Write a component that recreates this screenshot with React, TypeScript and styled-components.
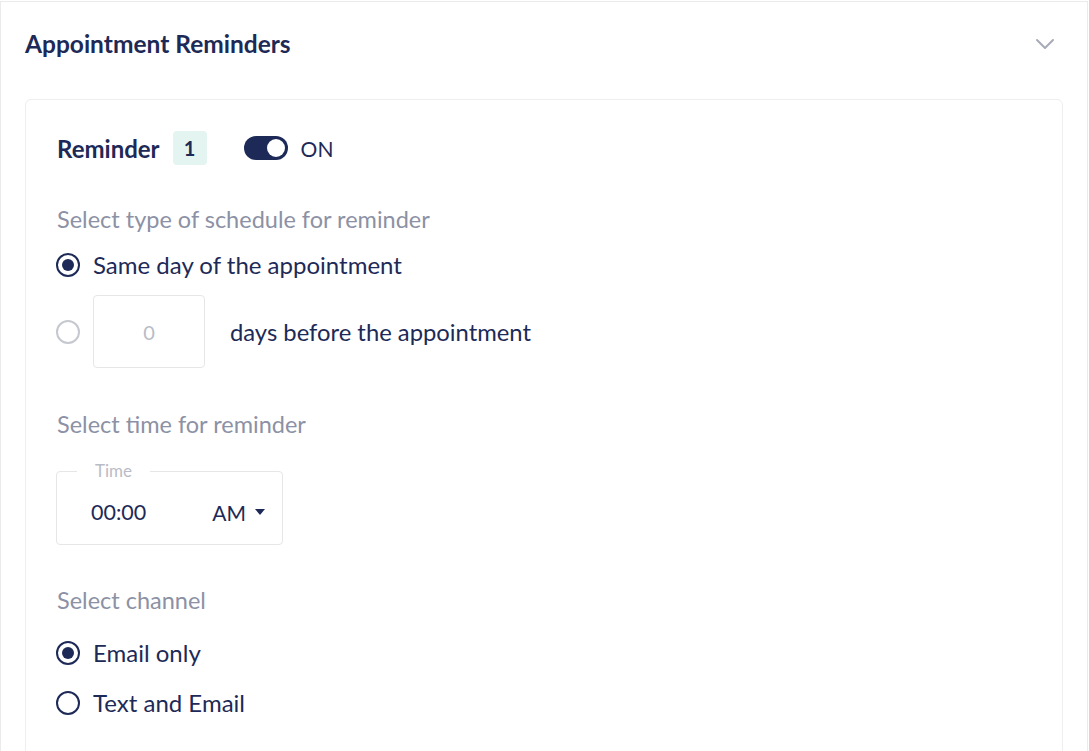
import React, { useState } from "react";
import styled, { createGlobalStyle } from "styled-components";

const COLOR = {
  NAVY: "#1d2a57",
  GRAY: "#8c91a5",
  LIGHT_GRAY: "#b9bcc6",
  BORDER: "#ebebeb",
  BADGE: "#e4f4f0",
};

const GlobalStyle = createGlobalStyle`
  html, body {
    margin: 0;
    padding: 0;
    background: #ffffff;
  }
  body {
    font-family: "Lato", "Noto Sans", sans-serif;
    color: ${COLOR.NAVY};
  }
`;

const ChevronDown: React.FC = () => (
  <svg width="20" height="12" viewBox="0 0 20 12" fill="none">
    <path
      d="M2 2 L10 10 L18 2"
      stroke="#a7abb6"
      strokeWidth="2"
      strokeLinecap="round"
      strokeLinejoin="round"
    />
  </svg>
);

interface RadioProps {
  checked?: boolean;
  disabled?: boolean;
}

const Radio: React.FC<RadioProps> = ({ checked, disabled }) => (
  <StyledRadio $checked={checked} $disabled={disabled} />
);

const App: React.FC = () => {
  const [sameDay, setSameDay] = useState(true);
  const [emailOnly, setEmailOnly] = useState(true);
  const [on, setOn] = useState(true);

  return (
    <>
      <GlobalStyle />
      <StyledPanel>
        <StyledHeader>
          <StyledTitle>Appointment Reminders</StyledTitle>
          <StyledChevronButton>
            <ChevronDown />
          </StyledChevronButton>
        </StyledHeader>

        <StyledCard>
          <StyledReminderRow>
            <StyledReminderLabel>Reminder</StyledReminderLabel>
            <StyledBadge>1</StyledBadge>
            <StyledToggle $on={on} onClick={() => setOn(!on)} />
            <StyledToggleText>{on ? "ON" : "OFF"}</StyledToggleText>
          </StyledReminderRow>

          <StyledSectionLabel $top={38}>Select type of schedule for reminder</StyledSectionLabel>
          <StyledOption onClick={() => setSameDay(true)} $top={14}>
            <Radio checked={sameDay} />
            <StyledOptionText>Same day of the appointment</StyledOptionText>
          </StyledOption>
          <StyledOption onClick={() => setSameDay(false)} $top={14}>
            <Radio checked={!sameDay} disabled={sameDay} />
            <StyledDaysBox>0</StyledDaysBox>
            <StyledDaysText>days before the appointment</StyledDaysText>
          </StyledOption>

          <StyledSectionLabel $top={40}>Select time for reminder</StyledSectionLabel>
          <StyledTimeField>
            <StyledLegend>Time</StyledLegend>
            <StyledTimeValue>00:00</StyledTimeValue>
            <StyledMeridiem>
              AM
              <StyledCaret />
            </StyledMeridiem>
          </StyledTimeField>

          <StyledSectionLabel $top={39}>Select channel</StyledSectionLabel>
          <StyledOption onClick={() => setEmailOnly(true)} $top={21}>
            <Radio checked={emailOnly} />
            <StyledOptionText>Email only</StyledOptionText>
          </StyledOption>
          <StyledOption onClick={() => setEmailOnly(false)} $top={18}>
            <Radio checked={!emailOnly} />
            <StyledOptionText>Text and Email</StyledOptionText>
          </StyledOption>
        </StyledCard>
      </StyledPanel>
    </>
  );
};
export default App;

const StyledPanel = styled.div`
  width: 1088px;
  height: 760px;
  box-sizing: border-box;
  margin-top: 1px;
  border: 1px solid ${COLOR.BORDER};
  background: #ffffff;
  overflow: hidden;
`;

const StyledHeader = styled.div`
  display: flex;
  align-items: center;
  justify-content: space-between;
  padding: 26px 32px 39px 24px;
`;

const StyledTitle = styled.h2`
  margin: 0;
  font-size: 24.5px;
  line-height: 32px;
  font-weight: 700;
  color: ${COLOR.NAVY};
`;

const StyledChevronButton = styled.div`
  display: flex;
  align-items: center;
  cursor: pointer;
`;

const StyledCard = styled.div`
  margin: 0 24px;
  padding: 31px 31px 40px;
  border: 1px solid #eeeeee;
  border-radius: 6px;
  display: flex;
  flex-direction: column;
  align-items: flex-start;
`;

const StyledReminderRow = styled.div`
  display: flex;
  align-items: center;
  height: 34px;
`;

const StyledReminderLabel = styled.span`
  font-size: 24px;
  font-weight: 700;
  color: ${COLOR.NAVY};
`;

const StyledBadge = styled.span`
  display: inline-flex;
  align-items: center;
  justify-content: center;
  width: 34px;
  height: 34px;
  margin-left: 13px;
  border-radius: 4px;
  background: ${COLOR.BADGE};
  font-size: 20px;
  font-weight: 700;
  color: ${COLOR.NAVY};
`;

const StyledToggle = styled.button<{ $on: boolean }>`
  position: relative;
  width: 44px;
  height: 24px;
  margin-left: 37px;
  padding: 0;
  border: none;
  border-radius: 12px;
  background: ${(p) => (p.$on ? COLOR.NAVY : "#c9ccd4")};
  cursor: pointer;

  &::after {
    content: "";
    position: absolute;
    top: 3px;
    left: ${(p) => (p.$on ? "23px" : "3px")};
    width: 18px;
    height: 18px;
    border-radius: 50%;
    background: #ffffff;
  }
`;

const StyledToggleText = styled.span`
  margin-left: 13px;
  font-size: 21px;
  color: ${COLOR.NAVY};
`;

const StyledSectionLabel = styled.div<{ $top: number }>`
  margin-top: ${(p) => p.$top}px;
  font-size: 23.5px;
  line-height: 32px;
  color: ${COLOR.GRAY};
`;

const StyledOption = styled.label<{ $top: number }>`
  display: flex;
  align-items: center;
  margin-top: ${(p) => p.$top}px;
  cursor: pointer;
`;

const StyledRadio = styled.span<{ $checked?: boolean; $disabled?: boolean }>`
  position: relative;
  flex: 0 0 auto;
  box-sizing: border-box;
  width: 24px;
  height: 24px;
  margin-left: -1px;
  border-radius: 50%;
  border: 2px solid ${(p) => (p.$disabled ? "#c6c8cf" : COLOR.NAVY)};
  background: #ffffff;

  &::after {
    content: "";
    display: ${(p) => (p.$checked ? "block" : "none")};
    position: absolute;
    top: 4px;
    left: 4px;
    width: 12px;
    height: 12px;
    border-radius: 50%;
    background: ${COLOR.NAVY};
  }
`;

const StyledOptionText = styled.span`
  margin-left: 13px;
  font-size: 24px;
  line-height: 32px;
  color: ${COLOR.NAVY};
`;

const StyledDaysBox = styled.div`
  display: flex;
  align-items: center;
  justify-content: center;
  box-sizing: border-box;
  width: 112px;
  height: 73px;
  margin-left: 13px;
  border: 1px solid #e6e6e6;
  border-radius: 4px;
  font-size: 20px;
  color: ${COLOR.LIGHT_GRAY};
`;

const StyledDaysText = styled.span`
  margin-left: 25px;
  font-size: 23.8px;
  color: ${COLOR.NAVY};
`;

const StyledTimeField = styled.div`
  position: relative;
  display: flex;
  align-items: center;
  box-sizing: border-box;
  width: 227px;
  height: 74px;
  margin: 31px 0 0 -1px;
  padding: 8px 17px 0 34px;
  border: 1px solid #e6e6e6;
  border-radius: 4px;
`;

const StyledLegend = styled.span`
  position: absolute;
  top: -11px;
  left: 20px;
  padding: 0 18px;
  background: #ffffff;
  font-size: 17px;
  line-height: 20px;
  color: ${COLOR.LIGHT_GRAY};
`;

const StyledTimeValue = styled.span`
  font-size: 21.5px;
  color: ${COLOR.NAVY};
`;

const StyledMeridiem = styled.span`
  display: flex;
  align-items: center;
  margin-left: auto;
  font-size: 21px;
  color: ${COLOR.NAVY};
`;

const StyledCaret = styled.span`
  width: 0;
  height: 0;
  margin-left: 9px;
  border-left: 5px solid transparent;
  border-right: 5px solid transparent;
  border-top: 6px solid ${COLOR.NAVY};
`;
